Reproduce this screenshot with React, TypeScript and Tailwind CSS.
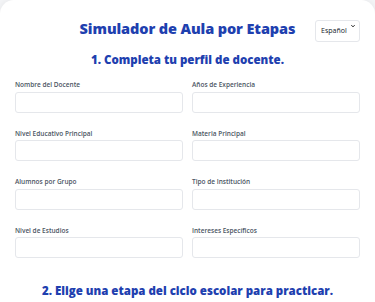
import { useState } from 'react';

// ── Teacher profile fields ───────────────────────────────────────────────────
const profileFields = [
  { id: 'nombre', label: 'Nombre del Docente' },
  { id: 'experiencia', label: 'Años de Experiencia' },
  { id: 'nivel', label: 'Nivel Educativo Principal' },
  { id: 'materia', label: 'Materia Principal' },
  { id: 'alumnos', label: 'Alumnos por Grupo' },
  { id: 'institucion', label: 'Tipo de Institución' },
  { id: 'estudios', label: 'Nivel de Estudios' },
  { id: 'intereses', label: 'Intereses Específicos' },
];

export default function App() {
  const [lang, setLang] = useState('es');

  return (
    <div className="min-h-screen bg-[#f3f4f6] font-['Open_Sans',sans-serif]">
      <div className="bg-white rounded-t-[14px] shadow-[0_0_6px_rgba(0,0,0,0.06)] px-[15px] pt-[15px] pb-6">
        {/* ── Header ── */}
        <header className="grid grid-cols-[1fr_auto_1fr] items-center">
          <div />
          <h1 className="font-['Open_Sans',sans-serif] font-extrabold text-[14.5px] leading-[20px] tracking-[-0.1px] text-[#1e40af]">
            Simulador de Aula por Etapas
          </h1>
          <div className="justify-self-end relative">
            <select
              value={lang}
              onChange={(e) => setLang(e.target.value)}
              className="appearance-none h-[22px] w-[45px] pl-[5px] pr-[8px] border border-[#e5e7eb] rounded-[3px] bg-white text-[7px] text-[#111827] outline-none"
            >
              <option value="es">Español</option>
              <option value="en">English</option>
            </select>
            <svg
              viewBox="0 0 10 10"
              className="pointer-events-none absolute right-[5px] top-[9px] w-[4px] h-[4px]"
            >
              <path d="M1 3 L5 7 L9 3" fill="none" stroke="#111" strokeWidth="2.5" />
            </svg>
          </div>
        </header>

        {/* ── Step 1 ── */}
        <h2 className="mt-[10px] text-center font-['Open_Sans',sans-serif] font-extrabold text-[11.5px] leading-[16px] text-[#1e40af]">
          1. Completa tu perfil de docente.
        </h2>

        <form className="mt-[12px] grid grid-cols-2 gap-x-[9px] gap-y-[16px]">
          {profileFields.map((f) => (
            <div key={f.id} className="flex flex-col">
              <label htmlFor={f.id} className="text-[6.5px] leading-[10px] font-semibold text-[#4b5563] mb-[1.5px]">
                {f.label}
              </label>
              <input
                id={f.id}
                className="h-[21px] w-full border border-[#e5e7eb] rounded-[3px] px-2 text-[8px] outline-none"
              />
            </div>
          ))}
        </form>

        {/* ── Step 2 ── */}
        <h2 className="mt-[25px] text-center font-['Open_Sans',sans-serif] font-extrabold text-[11.5px] leading-[16px] text-[#1e40af]">
          2. Elige una etapa del ciclo escolar para practicar.
        </h2>
      </div>
    </div>
  );
}
